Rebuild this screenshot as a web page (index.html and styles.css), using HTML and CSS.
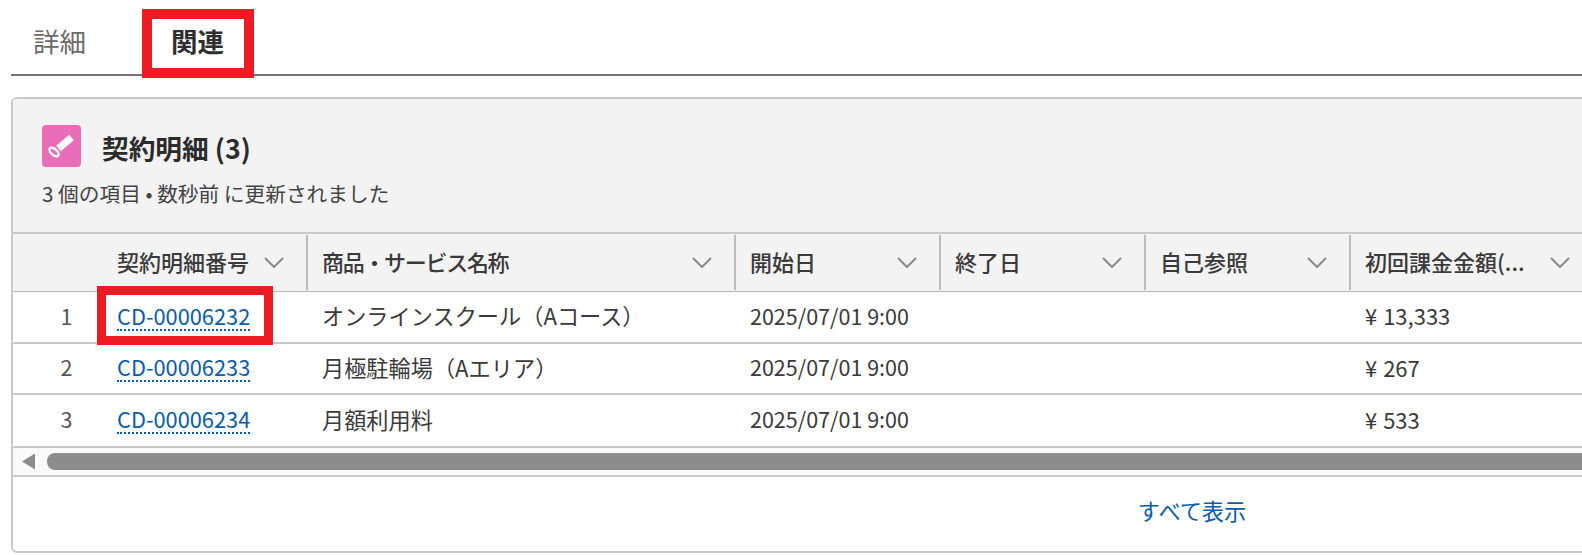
FILE: index.html
```html
<!DOCTYPE html>
<html lang="ja">
<head>
<meta charset="utf-8">
<title>契約明細</title>
<link rel="stylesheet" href="styles.css">
</head>
<body>
<nav class="tabs">
  <a class="tab">詳細</a>
  <a class="tab tab-active">関連</a>
  <span class="mark mark-tab"></span>
</nav>
<section class="card">
  <header class="card-head">
    <div class="title-row">
      <svg class="icon" viewBox="0 0 39 42" aria-hidden="true">
        <rect width="39" height="42" rx="4" fill="#e96db9"/>
        <path d="M16.500 23.500 L29.500 12.500" stroke="#fff" stroke-width="7" fill="none"/>
        <ellipse cx="12" cy="27" rx="3" ry="5.500" transform="rotate(-48 12 27)" fill="#e96db9" stroke="#fff" stroke-width="2.400"/>
      </svg>
      <h2 class="title">契約明細 (3)</h2>
    </div>
    <p class="subtitle">3 個の項目 • 数秒前 に更新されました</p>
  </header>
  <table class="grid">
    <colgroup>
      <col class="c-num"><col class="c-id"><col class="c-name"><col class="c-date"><col class="c-date"><col class="c-date"><col class="c-rest">
    </colgroup>
    <thead>
      <tr>
        <th></th>
        <th><div class="th-in"><span class="th-label">契約明細番号</span><svg class="chev" viewBox="0 0 20 11"><path d="M1 1 L10 10 L19 1"/></svg></div></th>
        <th class="sep"><div class="th-in"><span class="th-label th-tight">商品・サービス名称</span><svg class="chev" viewBox="0 0 20 11"><path d="M1 1 L10 10 L19 1"/></svg></div></th>
        <th class="sep"><div class="th-in"><span class="th-label">開始日</span><svg class="chev" viewBox="0 0 20 11"><path d="M1 1 L10 10 L19 1"/></svg></div></th>
        <th class="sep"><div class="th-in"><span class="th-label">終了日</span><svg class="chev" viewBox="0 0 20 11"><path d="M1 1 L10 10 L19 1"/></svg></div></th>
        <th class="sep"><div class="th-in"><span class="th-label">自己参照</span><svg class="chev" viewBox="0 0 20 11"><path d="M1 1 L10 10 L19 1"/></svg></div></th>
        <th class="sep"><div class="th-in th-last"><span class="th-label">初回課金金額(...</span><svg class="chev" viewBox="0 0 20 11"><path d="M1 1 L10 10 L19 1"/></svg></div></th>
      </tr>
    </thead>
    <tbody>
      <tr class="row-first">
        <td class="num">1</td>
        <td class="id"><a class="rec">CD-00006232</a><span class="mark mark-cell"></span></td>
        <td class="ja">オンラインスクール（Aコース）</td>
        <td>2025/07/01 9:00</td><td></td><td></td>
        <td class="amount">¥ 13,333</td>
      </tr>
      <tr>
        <td class="num">2</td>
        <td class="id"><a class="rec">CD-00006233</a></td>
        <td class="ja">月極駐輪場（Aエリア）</td>
        <td>2025/07/01 9:00</td><td></td><td></td>
        <td class="amount">¥ 267</td>
      </tr>
      <tr class="row-last">
        <td class="num">3</td>
        <td class="id"><a class="rec">CD-00006234</a></td>
        <td class="ja">月額利用料</td>
        <td>2025/07/01 9:00</td><td></td><td></td>
        <td class="amount">¥ 533</td>
      </tr>
    </tbody>
  </table>
  <div class="scrollbar">
    <span class="arrow"></span>
    <span class="thumb"></span>
  </div>
  <footer class="card-foot"><a class="view-all">すべて表示</a></footer>
</section>
</body>
</html>
```

FILE: styles.css
```css
* { box-sizing: border-box; }
html, body { margin: 0; height: 555px; overflow: hidden; background: #fff; }
body {
  width: 1582px;
  font-family: "Noto Sans CJK JP", "Noto Sans", sans-serif;
  color: #3a3a3a;
  font-size: 21px;
}
.tabs {
  position: relative;
  margin-left: 11px;
  height: 76px;
  display: flex;
  gap: 85px;
  padding: 21px 0 0 22px;
  border-bottom: 2px solid #747474;
  font-size: 26.500px;
  line-height: 40px;
}
.tab { color: #6a6a6a; }
.tab-active { color: #2e2e2e; font-weight: 700; }
.mark { position: absolute; border: 10px solid #ed1c24; pointer-events: none; }
.mark-tab { left: 131px; top: 9px; width: 112px; height: 69px; }
.card {
  width: 2362px;
  height: 456px;
  margin: 21px 0 0 11px;
  border: 2px solid #c9c9c9;
  border-radius: 6px;
  overflow: hidden;
}
.card-head { height: 133px; background: #f3f3f3; padding: 26px 0 0 29px; }
.title-row { display: flex; align-items: flex-start; gap: 21px; }
.icon { width: 39px; height: 42px; display: block; }
.title { margin: 2px 0 0; font-size: 26.700px; line-height: 42px; font-weight: 700; color: #2b2b2b; }
.subtitle { margin: 8px 0 0; font-size: 20.700px; line-height: 32px; color: #444; }
.grid { border-collapse: separate; border-spacing: 0; table-layout: fixed; width: 2358px; }
.c-num { width: 89px; }
.c-id { width: 204px; }
.c-name { width: 428px; }
.c-date { width: 205px; }
.c-rest { width: auto; }
th {
  height: 60px;
  padding: 0;
  background: #f3f3f3;
  border-top: 2px solid #c9c9c9;
  border-bottom: 1px solid #b5b5b5;
  font-weight: 400;
  text-align: left;
}
.th-in { display: flex; align-items: center; justify-content: space-between; height: 55px; padding: 0 22px 0 14px; }
th.sep .th-in { border-left: 2px solid #bcbcbc; }
.th-last { width: 231px; padding-right: 10px; }
.th-label { font-size: 22px; color: #3a3a3a; white-space: nowrap; font-weight: 500; margin-bottom: 4px; }
.th-tight { letter-spacing: -1.300px; }
th:nth-child(2) .th-in { padding-left: 15px; }
.chev { width: 20px; height: 11px; display: block; flex: none; }
.chev path { fill: none; stroke: #8a8a8a; stroke-width: 2; }
td {
  height: 51px;
  padding: 0 0 4px 16px;
  border-bottom: 2px solid #c9c9c9;
  white-space: nowrap;
  font-size: 21.500px;
  color: #3a3a3a;
}
.row-first td { height: 52px; }
.row-last td { height: 53px; }
.ja { font-size: 22.200px; }
.amount { font-size: 22px; word-spacing: 1px; }
.num { text-align: center; padding: 0 0 4px 18px; color: #555; }
.id { position: relative; padding-left: 15px; }
.rec { color: #0b5cab; border-bottom: 2px dotted #0b5cab; line-height: 26px; display: inline-block; font-size: 21.800px; }
.mark-cell { left: -5px; top: -6px; width: 176px; height: 59px; border-width: 9px; }
.scrollbar {
  height: 29px;
  background: #fafafa;
  border-bottom: 2px solid #c9c9c9;
  display: flex;
  align-items: center;
  padding: 0 0 0 9px;
  gap: 12px;
}
.arrow {
  width: 13px;
  height: 16px;
  background: #8c8c8c;
  clip-path: polygon(0 50%, 100% 0, 100% 100%);
}
.thumb { flex: 1; height: 17px; background: #8c8c8c; border-radius: 8px 0 0 8px; }
.card-foot { height: 74px; display: flex; align-items: center; justify-content: center; padding-bottom: 9px; }
.view-all { color: #0b5cab; font-size: 22.200px; }
```
